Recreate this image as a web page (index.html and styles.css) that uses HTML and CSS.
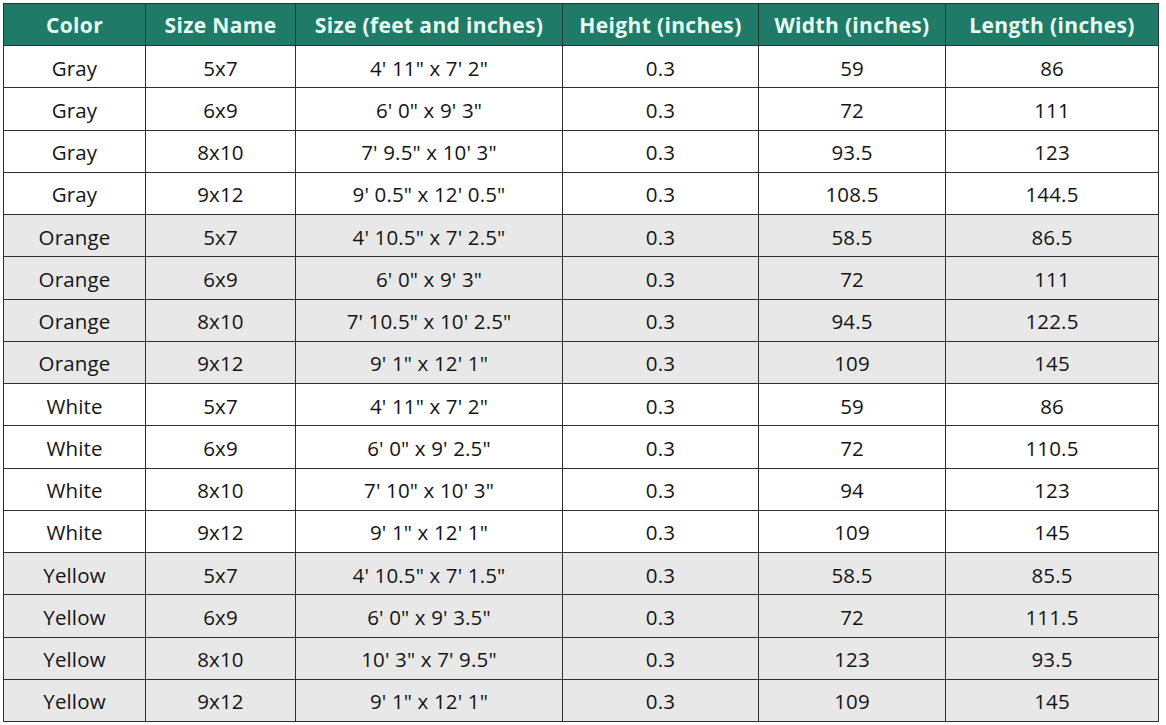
FILE: index.html
```html
<!DOCTYPE html>
<html>
<head>
<meta charset="utf-8">
<link rel="stylesheet" href="styles.css">
</head>
<body>
<table class="sizes">
<colgroup>
<col class="c1"><col class="c2"><col class="c3"><col class="c4"><col class="c5"><col class="c6">
</colgroup>
<thead>
<tr><th>Color</th><th>Size Name</th><th>Size (feet and inches)</th><th>Height (inches)</th><th>Width (inches)</th><th>Length (inches)</th></tr>
</thead>
<tbody>
<tr><td>Gray</td><td>5x7</td><td>4' 11" x 7' 2"</td><td>0.3</td><td>59</td><td>86</td></tr>
<tr><td>Gray</td><td>6x9</td><td>6' 0" x 9' 3"</td><td>0.3</td><td>72</td><td>111</td></tr>
<tr><td>Gray</td><td>8x10</td><td>7' 9.5" x 10' 3"</td><td>0.3</td><td>93.5</td><td>123</td></tr>
<tr><td>Gray</td><td>9x12</td><td>9' 0.5" x 12' 0.5"</td><td>0.3</td><td>108.5</td><td>144.5</td></tr>
<tr class="alt"><td>Orange</td><td>5x7</td><td>4' 10.5" x 7' 2.5"</td><td>0.3</td><td>58.5</td><td>86.5</td></tr>
<tr class="alt"><td>Orange</td><td>6x9</td><td>6' 0" x 9' 3"</td><td>0.3</td><td>72</td><td>111</td></tr>
<tr class="alt"><td>Orange</td><td>8x10</td><td>7' 10.5" x 10' 2.5"</td><td>0.3</td><td>94.5</td><td>122.5</td></tr>
<tr class="alt"><td>Orange</td><td>9x12</td><td>9' 1" x 12' 1"</td><td>0.3</td><td>109</td><td>145</td></tr>
<tr><td>White</td><td>5x7</td><td>4' 11" x 7' 2"</td><td>0.3</td><td>59</td><td>86</td></tr>
<tr><td>White</td><td>6x9</td><td>6' 0" x 9' 2.5"</td><td>0.3</td><td>72</td><td>110.5</td></tr>
<tr><td>White</td><td>8x10</td><td>7' 10" x 10' 3"</td><td>0.3</td><td>94</td><td>123</td></tr>
<tr><td>White</td><td>9x12</td><td>9' 1" x 12' 1"</td><td>0.3</td><td>109</td><td>145</td></tr>
<tr class="alt"><td>Yellow</td><td>5x7</td><td>4' 10.5" x 7' 1.5"</td><td>0.3</td><td>58.5</td><td>85.5</td></tr>
<tr class="alt"><td>Yellow</td><td>6x9</td><td>6' 0" x 9' 3.5"</td><td>0.3</td><td>72</td><td>111.5</td></tr>
<tr class="alt"><td>Yellow</td><td>8x10</td><td>10' 3" x 7' 9.5"</td><td>0.3</td><td>123</td><td>93.5</td></tr>
<tr class="alt"><td>Yellow</td><td>9x12</td><td>9' 1" x 12' 1"</td><td>0.3</td><td>109</td><td>145</td></tr>
</tbody>
</table>
</body>
</html>
```
FILE: styles.css
```css
html, body {
  margin: 0;
  padding: 0;
  background: #ffffff;
}
body {
  padding: 3px 0 0 3px;
  font-family: "Open Sans", "Liberation Sans", sans-serif;
}
.sizes {
  border-collapse: collapse;
  table-layout: fixed;
  width: 1155px;
  border: 1.5px solid #2a2a2a;
}
.c1 { width: 142px; }
.c2 { width: 150px; }
.c3 { width: 267px; }
.c4 { width: 196px; }
.c5 { width: 187px; }
.c6 { width: 213px; }
.sizes thead tr {
  height: 42px;
}
.sizes tbody tr {
  height: 42.25px;
}
.sizes th {
  background: #1f7a68;
  color: #e6fbf2;
  font-weight: 700;
  font-size: 21px;
  line-height: 26px;
  padding: 0;
  text-align: center;
  border: 1.5px solid #1b3a33;
  letter-spacing: 0.35px;
}
.sizes td {
  padding: 2px 0 0;
  text-align: center;
  font-size: 20.5px;
  line-height: 26px;
  color: #141414;
  border: 1.5px solid #2f2f2f;
  letter-spacing: 0.15px;
}
.sizes tr.alt td {
  background: #e8e8e8;
}
```
